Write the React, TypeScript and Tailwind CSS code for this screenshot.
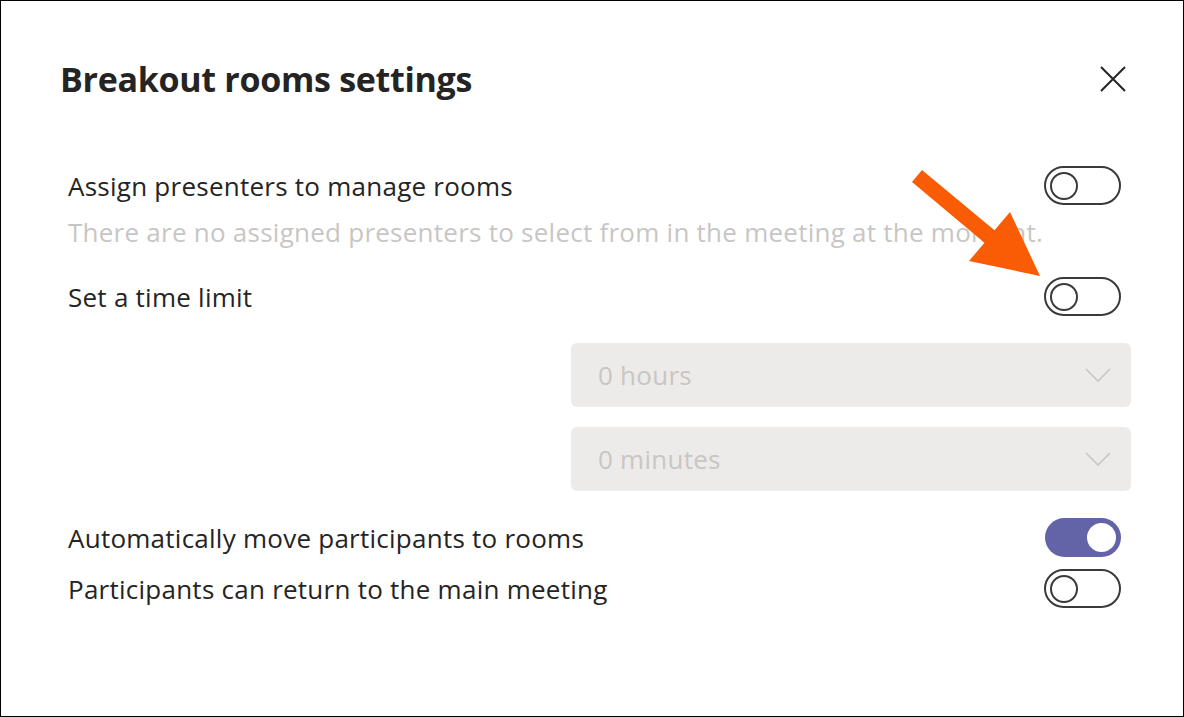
import React from "react";

function Toggle({ on = false }: { on?: boolean }) {
  if (on) {
    return (
      <div className="flex h-[39px] w-[76px] shrink-0 items-center justify-end rounded-full bg-[#6264a7] px-[5px]">
        <div className="h-[29px] w-[29px] rounded-full bg-white" />
      </div>
    );
  }
  return (
    <div className="flex h-[39px] w-[77px] shrink-0 items-center rounded-full border-2 border-[#3b3a39] bg-white px-[4px]">
      <div className="h-[28px] w-[28px] rounded-full border-2 border-[#3b3a39]" />
    </div>
  );
}

function Chevron() {
  return (
    <svg width="26" height="14" viewBox="0 0 26 14" fill="none">
      <path d="M1 1 L13 13 L25 1" stroke="#c8c6c4" strokeWidth="1.6" />
    </svg>
  );
}

function Dropdown({ label }: { label: string }) {
  return (
    <div className="flex h-[64px] w-[560px] items-center justify-between rounded-[6px] bg-[#edebe9] pl-[27px] pr-[20px]">
      <span className="text-[26px] leading-[36px] tracking-[0.25px] text-[#c8c6c4]">{label}</span>
      <Chevron />
    </div>
  );
}

export default function App() {
  return (
    <div
      className="relative h-[717px] w-[1184px] border border-black bg-white text-[#252424]"
      style={{ fontFamily: '"Open Sans", "Noto Sans", sans-serif' }}
    >
      <div className="flex items-center justify-between pl-[59px] pr-[57px] pt-[55px]">
        <h1 className="text-[34px] font-bold leading-[46px] tracking-[-0.3px]">Breakout rooms settings</h1>
        <svg width="26" height="26" viewBox="0 0 26 26" fill="none">
          <path d="M1 1 L25 25 M25 1 L1 25" stroke="#252424" strokeWidth="2" />
        </svg>
      </div>

      <div className="flex flex-col pl-[67px] pr-[62px] pt-[64px] text-[26px] leading-[36px] tracking-[0.25px]">
        <div className="flex items-center justify-between">
          <span>Assign presenters to manage rooms</span>
          <Toggle />
        </div>
        <div className="mt-[7px] leading-[40px] text-[#c8c6c4] whitespace-nowrap">
          There are no assigned presenters to select from in the meeting at the moment.
        </div>
        <div className="mt-[25px] flex items-center justify-between">
          <span>Set a time limit</span>
          <Toggle />
        </div>
        <div className="mr-[-10px] mt-[27px] flex flex-col items-end gap-[20px]">
          <Dropdown label="0 hours" />
          <Dropdown label="0 minutes" />
        </div>
        <div className="mt-[27px] flex items-center justify-between">
          <span>Automatically move participants to rooms</span>
          <Toggle on />
        </div>
        <div className="mt-[12px] flex items-center justify-between">
          <span>Participants can return to the main meeting</span>
          <Toggle />
        </div>
      </div>

      <svg
        className="pointer-events-none absolute left-0 top-0"
        width="1184"
        height="717"
        viewBox="0 0 1184 717"
      >
        <polygon
          points="921,169 993.5,229.3 1009,211 1039,275 968,260 983.5,241.7 911,181"
          fill="#fa5c05"
        />
      </svg>
    </div>
  );
}
